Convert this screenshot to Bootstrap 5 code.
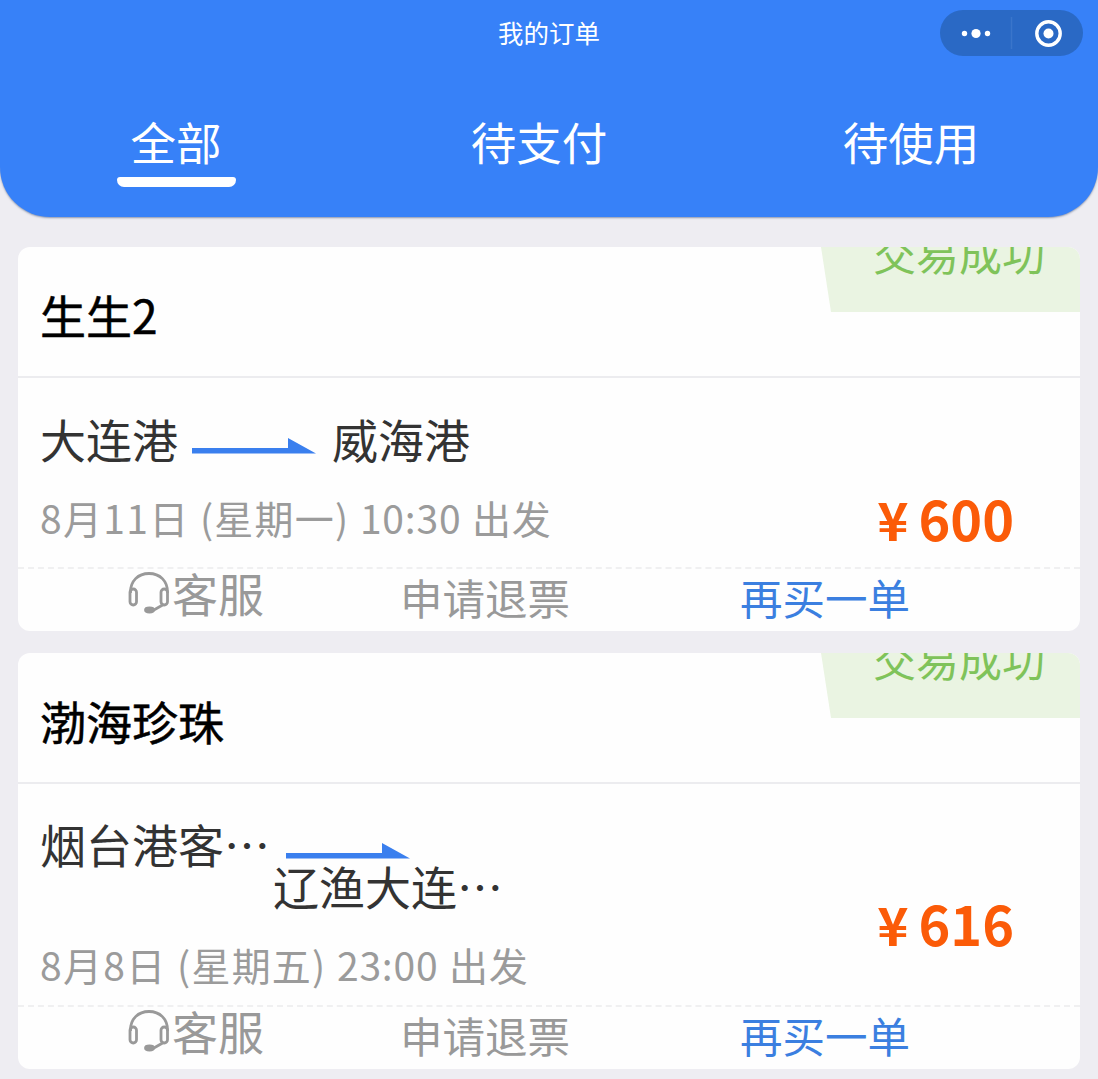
<!DOCTYPE html>
<html lang="zh-CN">
<head>
<meta charset="utf-8">
<meta name="viewport" content="width=device-width, initial-scale=1">
<title>我的订单</title>
<link href="https://cdn.jsdelivr.net/npm/bootstrap@5.3.0/dist/css/bootstrap.min.css" rel="stylesheet">
<style>
body{background:#eeedf2;font-family:"Noto Sans CJK SC",sans-serif;color:#333;overflow:hidden}
.top-area{height:217px;background:#3781f8;border-radius:0 0 50px 50px;box-shadow:0 1px 2px rgba(60,80,120,.55)}
.page-title{height:64px;line-height:64px;font-size:25.5px}
.capsule{top:10px;right:15px;width:143px;height:46px}
.tab-row{height:113px;padding-top:36px}
.tab-link{height:86px;width:140px;font-size:45.5px;line-height:82px;white-space:nowrap}
.tab-link.on::after{content:"";display:block;width:119px;height:10px;margin:-5px auto 0;background:#fff;border-radius:3px 3px 7px 7px}
.tab-a{margin-left:106px}.tab-b{margin-left:223px}.tab-c{margin-left:232px}
.orders{padding:30px 18px 0;gap:22px}
.order{background:#fefefe;border-radius:12px;overflow:hidden}
.order-head{height:131px;padding-left:22px;border-bottom:2px solid #ececef}
.ship{font-size:46px;line-height:134px;color:#000;-webkit-text-stroke:.5px #000}
.state{right:0;top:0;width:259px;height:65px;background:#eaf4e2;clip-path:polygon(0 0,100% 0,100% 100%,10px 100%);color:#7fc35a;font-size:43px;line-height:11px;padding-left:52px;white-space:nowrap}
.trip{height:189px;padding:28px 66px 0 22px}
.trip.tall{height:221px;padding-top:27px}
.port{font-size:46px;line-height:64px;height:64px;white-space:nowrap}
.arrow{width:124px;height:17px;margin:32px 16px 0 14px}
.tall .arrow{margin-left:16px}
.port-low{margin:-22px 0 0 233px}
.when{font-size:39px;line-height:50px;height:50px;color:#9b9b9b;margin-top:22px;white-space:nowrap;letter-spacing:.8px}
.d1{letter-spacing:1.3px}
.wk{margin-left:1px;letter-spacing:1.2px}
.tm{margin:0 1px}
.fee{color:#fb5b08;font-weight:700;font-size:54px;line-height:60px;margin-top:82px}
.yen{font-size:53px;margin-right:10px}
.acts{height:64px;border-top:2px dashed #f0f0f1;color:#999;font-size:42.5px;line-height:56px;white-space:nowrap}
.help{font-size:46px;line-height:47px;margin-left:110px;width:272px}
.help svg{width:42px;height:42px;margin:3px 2px 0 0}
.refund{width:340px}
.again{color:#3b7fe0}
</style>
</head>
<body>
<header class="top-area text-white position-relative">
  <div class="page-title text-center">我的订单</div>
  <svg class="capsule position-absolute" viewBox="0 0 143 46"><rect width="143" height="46" rx="23" fill="#2a69c5"/><path d="M71.5 7v32" stroke="#3a75cb" stroke-width="1.5"/><g fill="#fff"><circle cx="24.5" cy="23.5" r="2.7"/><circle cx="36" cy="23.5" r="4.6"/><circle cx="47.5" cy="23.5" r="2.7"/><circle cx="108.500" cy="23.5" r="5"/></g><circle cx="108.500" cy="23.5" r="11.7" fill="none" stroke="#fff" stroke-width="3.4"/></svg>
  <nav class="tab-row d-flex">
    <div class="tab-link tab-a on text-center">全部</div>
    <div class="tab-link tab-b text-center">待支付</div>
    <div class="tab-link tab-c text-center">待使用</div>
  </nav>
</header>
<main class="orders d-flex flex-column">
  <section class="order">
    <div class="order-head position-relative"><div class="ship">生生2</div><div class="state position-absolute">交易成功</div></div>
    <div class="trip d-flex justify-content-between">
      <div>
        <div class="d-flex"><div class="port">大连港</div><svg class="arrow" viewBox="0 0 124 17"><path d="M0 10H96V0L124 15.500H0z" fill="#3a7fee"/></svg><div class="port">威海港</div></div>
        <div class="when"><span class="d1">8月11日</span> <span class="wk">(星期一)</span> <span class="tm">10:30</span> 出发</div>
      </div>
      <div class="fee"><span class="yen">¥</span>600</div>
    </div>
    <div class="acts d-flex">
      <div class="help d-flex"><svg viewBox="0 0 42 42" fill="none" stroke="#999" stroke-width="2.8"><path d="M2.500 21V20C2.500 9 10 1.500 21 1.500S39.500 9 39.500 20v1"/><rect x="2" y="17" width="6.500" height="16" rx="3.200"/><rect x="33" y="17" width="6.500" height="16" rx="3.200"/><path d="M35.500 32.500L25 38.500"/><ellipse cx="21.500" cy="38" rx="4" ry="2" fill="#999"/></svg><span>客服</span></div>
      <div class="refund">申请退票</div>
      <div class="again">再买一单</div>
    </div>
  </section>
  <section class="order">
    <div class="order-head position-relative"><div class="ship">渤海珍珠</div><div class="state position-absolute">交易成功</div></div>
    <div class="trip tall d-flex justify-content-between">
      <div>
        <div class="d-flex"><div class="port">烟台港客…</div><svg class="arrow" viewBox="0 0 124 17"><path d="M0 10H96V0L124 15.500H0z" fill="#3a7fee"/></svg></div>
        <div class="port port-low">辽渔大连…</div>
        <div class="when"><span class="d1">8月8日</span> <span class="wk">(星期五)</span> <span class="tm">23:00</span> 出发</div>
      </div>
      <div class="fee"><span class="yen">¥</span>616</div>
    </div>
    <div class="acts d-flex">
      <div class="help d-flex"><svg viewBox="0 0 42 42" fill="none" stroke="#999" stroke-width="2.8"><path d="M2.500 21V20C2.500 9 10 1.500 21 1.500S39.500 9 39.500 20v1"/><rect x="2" y="17" width="6.500" height="16" rx="3.200"/><rect x="33" y="17" width="6.500" height="16" rx="3.200"/><path d="M35.500 32.500L25 38.500"/><ellipse cx="21.500" cy="38" rx="4" ry="2" fill="#999"/></svg><span>客服</span></div>
      <div class="refund">申请退票</div>
      <div class="again">再买一单</div>
    </div>
  </section>
</main>
<script src="https://cdn.jsdelivr.net/npm/bootstrap@5.3.0/dist/js/bootstrap.bundle.min.js"></script>
</body>
</html>
